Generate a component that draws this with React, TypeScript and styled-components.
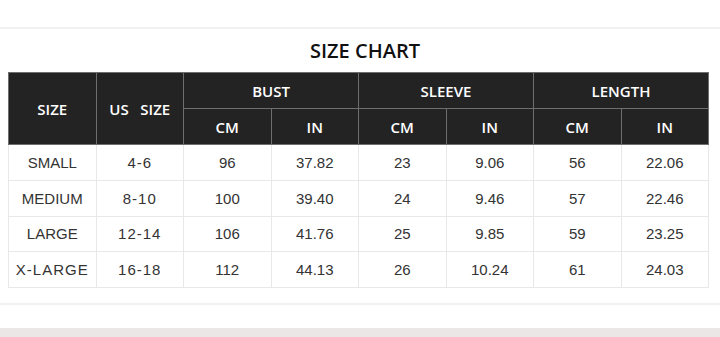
import { styled, createGlobalStyle } from 'styled-components';

const GlobalStyle = createGlobalStyle`
  html, body {
    margin: 0;
    padding: 0;
    background: #ffffff;
  }
`;

const S = {
  Page: styled.div`
    display: flex;
    flex-direction: column;
    width: 720px;
    height: 337px;
    overflow: hidden;
    padding-top: 27px;
    box-sizing: border-box;
  `,

  Divider: styled.div`
    height: 2px;
    background: #f1f1f1;
  `,

  Section: styled.section`
    display: flex;
    flex-direction: column;
    align-items: flex-start;
    padding: 8px 0 15px 8px;
  `,

  Title: styled.h1`
    align-self: center;
    margin: 0 0 7px;
    height: 28px;
    line-height: 28px;
    font-family: 'Open Sans', 'Noto Sans', sans-serif;
    font-size: 20px;
    font-weight: 600;
    color: #111111;
    padding-left: 2px;
  `,

  Table: styled.table`
    width: 700px;
    border-collapse: collapse;
    table-layout: fixed;
  `,

  HeadCell: styled.th`
    height: 35px;
    padding: 0;
    background: #232323;
    border: 1px solid #6e6e6e;
    color: #ffffff;
    font-family: 'Open Sans', 'Noto Sans', sans-serif;
    font-size: 15px;
    font-weight: 600;
    text-align: center;
    white-space: pre;
  `,

  Cell: styled.td`
    height: 34.8px;
    padding: 0;
    border: 1px solid #e8e8e8;
    color: #333333;
    font-family: 'Liberation Sans', Arial, sans-serif;
    font-size: 15px;
    text-align: center;
  `,

  Spaced: styled.span`
    letter-spacing: 1px;
  `,

  Spacer: styled.div`
    height: 23px;
  `,

  Footer: styled.div`
    flex: 1;
    background: #ebe7e7;
  `,
};

const rows = [
  ['SMALL', '4-6', '96', '37.82', '23', '9.06', '56', '22.06'],
  ['MEDIUM', '8-10', '100', '39.40', '24', '9.46', '57', '22.46'],
  ['LARGE', '12-14', '106', '41.76', '25', '9.85', '59', '23.25'],
  ['X-LARGE', '16-18', '112', '44.13', '26', '10.24', '61', '24.03'],
];

function App() {
  return (
    <>
      <GlobalStyle />
      <S.Page>
        <S.Divider />
        <S.Section>
          <S.Title>SIZE CHART</S.Title>
          <S.Table>
            <colgroup>
              {rows[0].map((_, i) => (
                <col key={i} style={{ width: '87.5px' }} />
              ))}
            </colgroup>
            <thead>
              <tr>
                <S.HeadCell rowSpan={2}>SIZE</S.HeadCell>
                <S.HeadCell rowSpan={2}>{'US   SIZE'}</S.HeadCell>
                <S.HeadCell colSpan={2}>BUST</S.HeadCell>
                <S.HeadCell colSpan={2}>SLEEVE</S.HeadCell>
                <S.HeadCell colSpan={2}>LENGTH</S.HeadCell>
              </tr>
              <tr>
                <S.HeadCell>CM</S.HeadCell>
                <S.HeadCell>IN</S.HeadCell>
                <S.HeadCell>CM</S.HeadCell>
                <S.HeadCell>IN</S.HeadCell>
                <S.HeadCell>CM</S.HeadCell>
                <S.HeadCell>IN</S.HeadCell>
              </tr>
            </thead>
            <tbody>
              {rows.map((row) => (
                <tr key={row[0]}>
                  {row.map((v, i) => (
                    <S.Cell key={i}>
                      {v.includes('-') ? <S.Spaced>{v}</S.Spaced> : v}
                    </S.Cell>
                  ))}
                </tr>
              ))}
            </tbody>
          </S.Table>
        </S.Section>
        <S.Divider />
        <S.Spacer />
        <S.Footer />
      </S.Page>
    </>
  );
}

export default App;
